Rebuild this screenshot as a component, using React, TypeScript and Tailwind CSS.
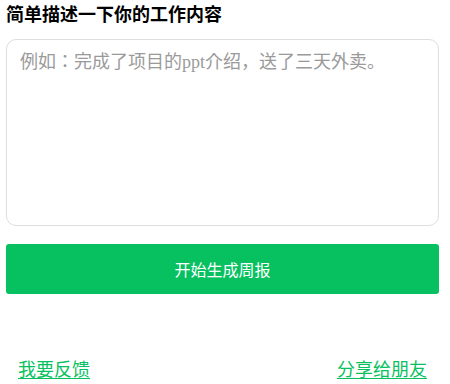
import React from "react";

export default function App() {
  return (
    <div
      className="w-[450px] h-[384px] bg-white px-[6px] pt-[1px] overflow-hidden"
      style={{ fontFamily: '"Noto Sans CJK SC", sans-serif' }}
    >
      <div className="w-[433px]">
        <h1 className="text-[18px] leading-[24px] font-bold text-black">
          简单描述一下你的工作内容
        </h1>
        <textarea
          className="mt-[14px] block w-full h-[187px] resize-none rounded-[10px] border border-[#dedede] bg-white px-[13px] pt-[10px] text-[18px] leading-[24px] text-[#333] outline-none placeholder:text-[#9a9a9a] font-['Liberation_Serif','Noto_Sans_CJK_JP',serif]"
          placeholder="例如：完成了项目的ppt介绍，送了三天外卖。"
        />
        <button className="mt-[18px] flex h-[50px] w-full items-center justify-center rounded-[3px] bg-[#07c160] text-[16px] text-white">
          开始生成周报
        </button>
        <div className="mt-[62px] flex justify-between px-[12px] text-[18px] leading-[24px] text-[#07c160]">
          <a className="underline underline-offset-[2px]">我要反馈</a>
          <a className="underline underline-offset-[2px]">分享给朋友</a>
        </div>
      </div>
    </div>
  );
}
